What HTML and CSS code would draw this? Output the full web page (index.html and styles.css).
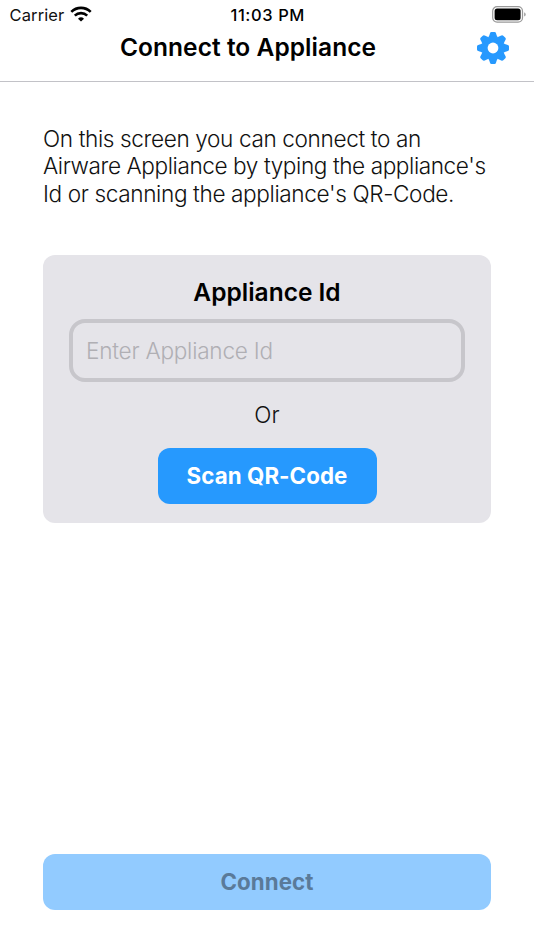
FILE: index.html
```html
<!DOCTYPE html>
<html lang="en">
<head>
<meta charset="utf-8">
<title>Connect to Appliance</title>
<link rel="stylesheet" href="styles.css">
</head>
<body>
<div class="screen">
  <header class="header">
    <div class="status">
      <div class="carrier"><span class="carrier-name">Carrier</span>
        <svg class="wifi" viewBox="0 0 22 17"><g fill="none" stroke="#000" stroke-width="2.6"><path d="M1.3 5.9a13.8 13.8 0 0 1 19.4 0"/><path d="M4.8 9.7a8.8 8.8 0 0 1 12.4 0"/></g><path d="M11 15.6 8 12.7a4.4 4.4 0 0 1 6 0z"/></svg>
      </div>
      <span class="time">11:03 PM</span>
      <svg class="battery" viewBox="0 0 35 17"><rect x=".7" y=".7" width="29.8" height="15.4" rx="4.4" fill="none" stroke="#999" stroke-width="1.2"/><rect x="2.6" y="2.6" width="26" height="11.6" rx="2.5"/><path d="M32.2 6.2c2 .8 2 3.6 0 4.4z" fill="#999"/></svg>
    </div>
    <div class="nav">
      <h1 class="title">Connect to Appliance</h1>
      <svg class="gear" viewBox="-16 -16 32 32"><g fill="#2699fe"><path id="tooth" d="M-5-10.5Q-3.8-11.5-3.4-13.4L-3-14.8Q-2.7-16-1.5-16H1.5Q2.7-16 3-14.8L3.4-13.4Q3.8-11.5 5-10.5z"/><use href="#tooth" transform="rotate(45)"/><use href="#tooth" transform="rotate(90)"/><use href="#tooth" transform="rotate(135)"/><use href="#tooth" transform="rotate(180)"/><use href="#tooth" transform="rotate(225)"/><use href="#tooth" transform="rotate(270)"/><use href="#tooth" transform="rotate(315)"/><circle r="11.6"/></g><circle r="5.4" fill="#fff"/></svg>
    </div>
  </header>
  <main class="content">
    <p class="intro"><span class="line l1">On this screen you can connect to an</span> <span class="line l2">Airware Appliance by typing the appliance's</span> <span class="line l3">Id or scanning the appliance's QR-Code.</span></p>
    <section class="card">
      <h2 class="card-title">Appliance Id</h2>
      <input class="field" type="text" placeholder="Enter Appliance Id">
      <p class="or">Or</p>
      <button class="button scan">Scan QR-Code</button>
    </section>
    <button class="button connect">Connect</button>
  </main>
</div>
</body>
</html>
```
FILE: styles.css
```css
* { box-sizing: border-box; }
body { margin: 0; background: #fff; color: #000; font-family: Inter, "Liberation Sans", sans-serif; }
h1, h2, p { margin: 0; }
svg { display: block; }
.screen { display: flex; flex-direction: column; height: 950px; }
.header { height: 82px; border-bottom: 1.5px solid #c2c2c7; }
.status { display: grid; grid-template-columns: 1fr auto 1fr; align-items: center; height: 29px; padding: 0 7px 0 9.5px; line-height: 30px; }
.carrier { display: flex; align-items: center; gap: 6px; color: #111; }
.carrier-name { font-size: 16.5px; letter-spacing: .12px; }
.wifi { width: 22px; height: 17px; margin-bottom: 2px; }
.time { font-size: 16.5px; font-weight: 550; letter-spacing: .6px; margin-right: 1px; }
.battery { width: 35px; height: 17px; justify-self: end; margin-bottom: 2px; }
.nav { display: flex; align-items: center; height: 38px; padding: 0 25px 0 19px; }
.title { flex: 1; text-align: center; font-size: 24.5px; font-weight: 600; line-height: 36px; padding-bottom: 2px; letter-spacing: .05px; }
.gear { width: 32px; height: 32px; }
.content { flex: 1; display: flex; flex-direction: column; padding: 43px 43px 40px; }
.intro { font-size: 22.6px; line-height: 27.4px; font-weight: 300; height: 82px; color: #111; }
.line { display: block; white-space: nowrap; }
.l1 { letter-spacing: -.38px; }
.l2 { letter-spacing: -.42px; }
.l3 { letter-spacing: -.38px; }
.card { margin-top: 48px; height: 268px; padding: 22px 26px 18px; background: #e5e4e9; border-radius: 12px; display: flex; flex-direction: column; align-items: center; }
.card-title { font-size: 24.5px; font-weight: 600; line-height: 30px; }
.field { margin-top: 12px; width: 100%; height: 63px; flex: none; border: 4px solid #c7c6cb; border-radius: 16px; background: transparent; padding: 0 13px; font: 300 22.6px Inter, sans-serif; letter-spacing: -.24px; outline: none; }
.field::placeholder { color: #b0afb4; opacity: 1; }
.or { margin-top: 18px; font-size: 22.6px; font-weight: 300; line-height: 30px; color: #111; }
.button { border: 0; padding: 0 0 2px; border-radius: 12px; height: 56px; flex: none; font: 650 22.3px Inter, sans-serif; letter-spacing: .08px; }
.scan { margin-top: 18px; width: 219px; background: #2699fe; color: #fff; }
.connect { margin-top: auto; width: 100%; background: #92cbff; color: #5a7a99; }
```
